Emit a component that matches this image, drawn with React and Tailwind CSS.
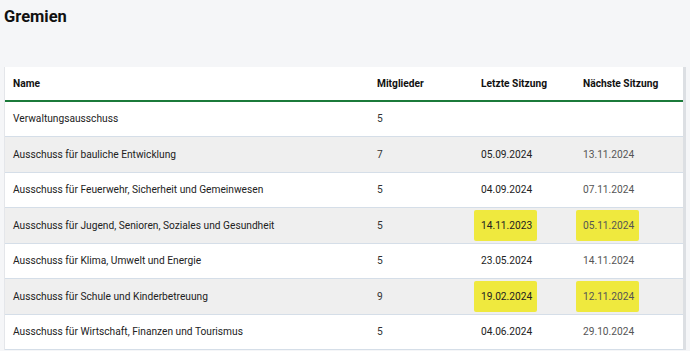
const rows = [
  { name: 'Verwaltungsausschuss', count: '5', last: '', next: '' },
  { name: 'Ausschuss für bauliche Entwicklung', count: '7', last: '05.09.2024', next: '13.11.2024' },
  { name: 'Ausschuss für Feuerwehr, Sicherheit und Gemeinwesen', count: '5', last: '04.09.2024', next: '07.11.2024' },
  { name: 'Ausschuss für Jugend, Senioren, Soziales und Gesundheit', count: '5', last: '14.11.2023', next: '05.11.2024', mark: true },
  { name: 'Ausschuss für Klima, Umwelt und Energie', count: '5', last: '23.05.2024', next: '14.11.2024' },
  { name: 'Ausschuss für Schule und Kinderbetreuung', count: '9', last: '19.02.2024', next: '12.11.2024', mark: true },
  { name: 'Ausschuss für Wirtschaft, Finanzen und Tourismus', count: '5', last: '04.06.2024', next: '29.10.2024' },
];

// yellow marker annotation drawn over a date
function Marked({ children, on }) {
  if (!on) return children;
  return (
    <span className="inline-block -ml-[7px] -mr-[5px] -my-2 pl-[7px] pr-[5px] py-2 bg-[#efe93e] rounded-[2px]">{children}</span>
  );
}

export default function App() {
  return (
    <div className="min-h-screen bg-[#f5f6f8] pl-1 pr-1 pt-[7px] font-['Roboto',sans-serif] text-[#222]">
      <h1 className="text-[16.5px] font-bold leading-[20px] text-[#111]">Gremien</h1>

      <div className="mt-[40px] bg-white border-l border-[#e4e6ea] border-r-[3px] border-r-[#dcdfe3]">
        <table className="w-full border-collapse text-[10.2px]">
          <colgroup>
            <col className="w-[364px]" />
            <col className="w-[104px]" />
            <col className="w-[102px]" />
            <col />
          </colgroup>
          <thead>
            <tr className="h-[34px] border-b-2 border-[#1b7a3a]">
              <th className="text-left font-bold pl-2 text-[#111]">Name</th>
              <th className="text-left font-bold pl-2 text-[#111]">Mitglieder</th>
              <th className="text-left font-bold pl-2 text-[#111]">Letzte Sitzung</th>
              <th className="text-left font-bold pl-2 text-[#111]">Nächste Sitzung</th>
            </tr>
          </thead>
          <tbody>
            {rows.map((r, i) => (
              <tr
                key={r.name}
                className={`h-[35.5px] border-b border-[#d5dee8] ${i % 2 === 1 ? 'bg-[#efefef]' : 'bg-white'}`}
              >
                <td className="pl-2 text-[#222]">{r.name}</td>
                <td className="pl-2 text-[#333]">{r.count}</td>
                <td className="pl-2 text-[#222]">
                  <Marked on={r.mark}>{r.last}</Marked>
                </td>
                <td className="pl-2 text-[#555]">
                  <Marked on={r.mark}>{r.next}</Marked>
                </td>
              </tr>
            ))}
          </tbody>
        </table>
      </div>
    </div>
  );
}
